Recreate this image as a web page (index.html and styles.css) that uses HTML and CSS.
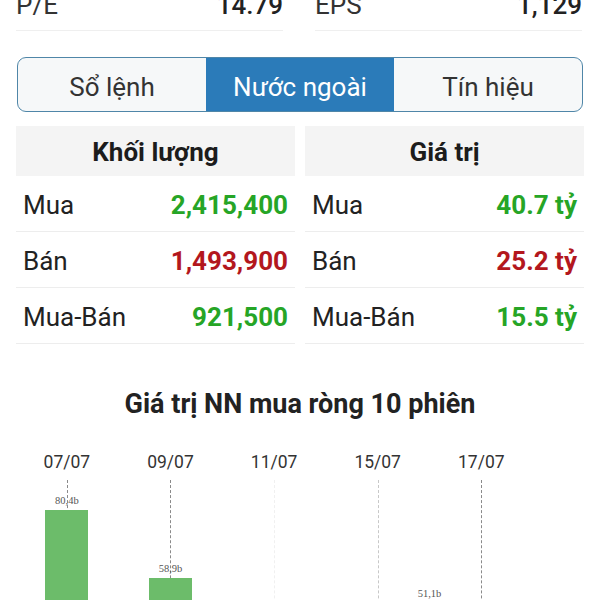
FILE: index.html
```html
<!DOCTYPE html>
<html>
<head>
    <meta charset="utf-8">
    <link rel="stylesheet" href="styles.css">
</head>
<body>
    <div class="stats">
        <div class="stat"><span>P/E</span><span class="stat-value">14.79</span></div>
        <div class="stat"><span>EPS</span><span class="stat-value">1,129</span></div>
    </div>

    <div class="tabs">
        <div class="tab">Sổ lệnh</div>
        <div class="tab active">Nước ngoài</div>
        <div class="tab">Tín hiệu</div>
    </div>

    <div class="foreign">
        <div class="panel">
            <div class="panel-head">Khối lượng</div>
            <div class="row"><span>Mua</span><span class="num up">2,415,400</span></div>
            <div class="row"><span>Bán</span><span class="num down">1,493,900</span></div>
            <div class="row"><span>Mua-Bán</span><span class="num up">921,500</span></div>
        </div>
        <div class="panel">
            <div class="panel-head">Giá trị</div>
            <div class="row"><span>Mua</span><span class="num up">40.7 tỷ</span></div>
            <div class="row"><span>Bán</span><span class="num down">25.2 tỷ</span></div>
            <div class="row"><span>Mua-Bán</span><span class="num up">15.5 tỷ</span></div>
        </div>
    </div>

    <h3 class="chart-title">Giá trị NN mua ròng 10 phiên</h3>

    <div class="chart">
        <div class="col">
            <div class="date">07/07</div>
            <div class="plot guide">
                <div class="bar" style="height: 254px"><span class="bar-label">80,4b</span></div>
            </div>
        </div>
        <div class="col">
            <div class="date"></div>
            <div class="plot"></div>
        </div>
        <div class="col">
            <div class="date">09/07</div>
            <div class="plot guide">
                <div class="bar" style="height: 186px"><span class="bar-label">58,9b</span></div>
            </div>
        </div>
        <div class="col">
            <div class="date"></div>
            <div class="plot"></div>
        </div>
        <div class="col">
            <div class="date">11/07</div>
            <div class="plot guide faint"></div>
        </div>
        <div class="col">
            <div class="date"></div>
            <div class="plot"></div>
        </div>
        <div class="col">
            <div class="date">15/07</div>
            <div class="plot guide light"></div>
        </div>
        <div class="col">
            <div class="date"></div>
            <div class="plot">
                <div class="bar" style="height: 161px"><span class="bar-label">51,1b</span></div>
            </div>
        </div>
        <div class="col">
            <div class="date">17/07</div>
            <div class="plot guide"></div>
        </div>
        <div class="col">
            <div class="date"></div>
            <div class="plot"></div>
        </div>
    </div>
</body>
</html>
```

FILE: styles.css
```css
body {
    margin: 0;
    background: #fff;
    font-family: Roboto, "Liberation Sans", sans-serif;
    color: #262626;
}

.stats {
    display: grid;
    grid-template-columns: 1fr 1fr;
    gap: 32px;
    padding: 0 18px 0 16px;
    margin-top: -10px;
}
.stat {
    display: flex;
    justify-content: space-between;
    font-size: 26px;
    line-height: 30px;
    padding-bottom: 10px;
    border-bottom: 1px solid #efefef;
    color: #333;
}
.stat-value {
    font-weight: 500;
    color: #222;
}

.tabs {
    display: grid;
    grid-template-columns: 1fr 1fr 1fr;
    margin: 26px 17px 0 17px;
    height: 55px;
    box-sizing: border-box;
    border: 1.5px solid #4f86a8;
    border-radius: 9px;
    overflow: hidden;
    background: #f6f8f9;
}
.tab {
    font-size: 26px;
    line-height: 52px;
    padding-top: 3px;
    text-align: center;
    color: #333;
}
.tab.active {
    background: #2b7bb9;
    color: #fff;
}

.foreign {
    display: grid;
    grid-template-columns: 1fr 1fr;
    gap: 10px;
    padding: 0 16px;
    margin-top: 14px;
}
.panel-head {
    height: 50px;
    line-height: 52px;
    background: #f4f4f4;
    text-align: center;
    font-size: 26px;
    font-weight: 700;
    color: #1c1c1c;
}
.row {
    display: flex;
    justify-content: space-between;
    align-items: center;
    height: 53px;
    padding: 2px 7px 0 7px;
    border-bottom: 1px solid #ededed;
    font-size: 26px;
    color: #222;
}
.num {
    font-weight: 700;
}
.up {
    color: #26a526;
}
.down {
    color: #b3171d;
}

.chart-title {
    margin: 45px 0 0 0;
    font-size: 27px;
    line-height: 30px;
    font-weight: 700;
    text-align: center;
    color: #222;
}

.chart {
    display: grid;
    grid-template-columns: repeat(10, 51.8px);
    padding-left: 41px;
    margin-top: 31px;
}
.col {
    display: flex;
    flex-direction: column;
    align-items: center;
}
.date {
    height: 24px;
    line-height: 24px;
    font-size: 17.5px;
    color: #333;
    white-space: nowrap;
}
.plot {
    position: relative;
    width: 100%;
    height: 290px;
    display: flex;
    align-items: flex-end;
    justify-content: center;
}
.guide::before {
    content: "";
    position: absolute;
    top: 6px;
    bottom: 0;
    left: 50%;
    border-left: 1px dashed #8a8a8a;
}
.guide.light::before {
    border-left-color: #c8c8c8;
}
.guide.faint::before {
    border-left-color: #f0f0f0;
}
.bar {
    position: relative;
    width: 43px;
    background: #6cbc6a;
}
.bar-label {
    position: absolute;
    bottom: 100%;
    left: 50%;
    transform: translateX(-50%);
    margin-bottom: 3px;
    font-family: "Liberation Serif", serif;
    font-size: 10.5px;
    line-height: 12px;
    color: #555;
    white-space: nowrap;
}
```
